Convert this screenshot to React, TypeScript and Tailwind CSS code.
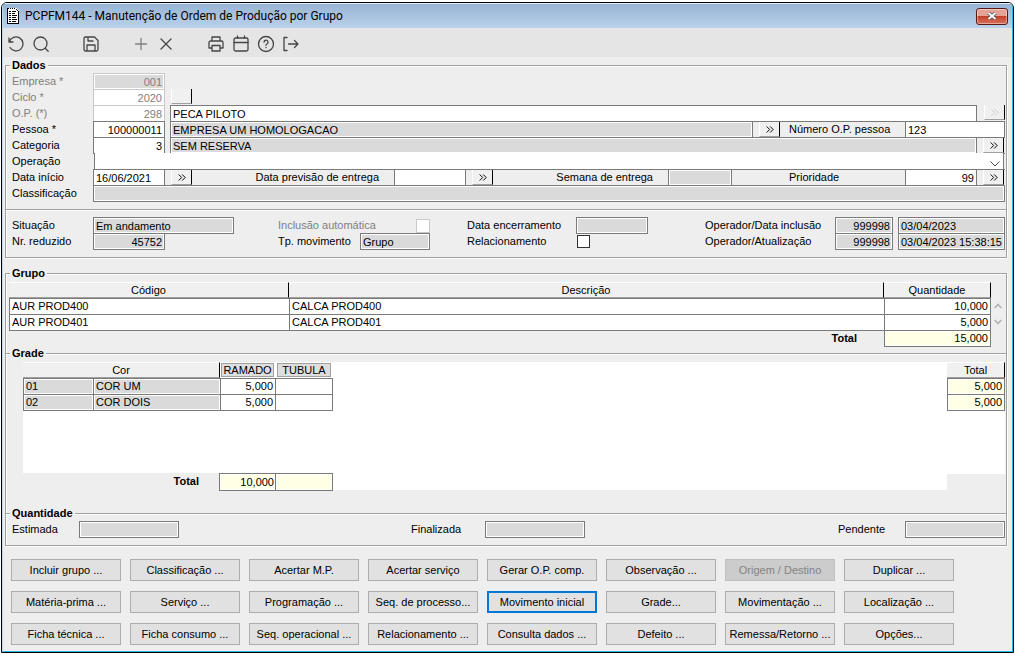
import type { ReactNode } from 'react'
import clsx from 'clsx'

const groupRows = [
  { code: 'AUR PROD400', description: 'CALCA PROD400', quantity: '10,000' },
  { code: 'AUR PROD401', description: 'CALCA PROD401', quantity: '5,000' },
]

const gradeRows = [
  { code: '01', color: 'COR UM', ramado: '5,000', total: '5,000' },
  { code: '02', color: 'COR DOIS', ramado: '5,000', total: '5,000' },
]

const actions = [
  'Incluir grupo ...', 'Classificação ...', 'Acertar M.P.', 'Acertar serviço',
  'Gerar O.P. comp.', 'Observação ...', 'Origem / Destino', 'Duplicar ...',
  'Matéria-prima ...', 'Serviço ...', 'Programação ...', 'Seq. de processo...',
  'Movimento inicial', 'Grade...', 'Movimentação ...', 'Localização ...',
  'Ficha técnica ...', 'Ficha consumo ...', 'Seq. operacional ...', 'Relacionamento ...',
  'Consulta dados ...', 'Defeito ...', 'Remessa/Retorno ...', 'Opções...',
]

function Icon({ children }: { children: ReactNode }) {
  return (
    <svg viewBox="0 0 18 18" className="size-[18px]" fill="none" stroke="currentColor" strokeWidth="1.3" strokeLinecap="round" strokeLinejoin="round">
      {children}
    </svg>
  )
}

function ToolButton({ name, className, children }: { name: string; className?: string; children: ReactNode }) {
  return (
    <button type="button" aria-label={name} className={clsx('flex h-6 w-[25px] items-center justify-center', className)}>
      <Icon>{children}</Icon>
    </button>
  )
}

function Group({ title, last, children }: { title: string; last?: boolean; children: ReactNode }) {
  return (
    <fieldset
      className={clsx(
        'min-w-0 border border-[#a0a0a0] shadow-[1px_1px_0_#fff,inset_1px_1px_0_#fff]',
        !last && 'border-b-0',
      )}
    >
      <legend className="ml-1 h-4 bg-[#eee] px-0.5 font-bold leading-4">{title}</legend>
      {children}
    </fieldset>
  )
}

type FieldProps = {
  id: string
  value?: string
  label?: string
  locked?: boolean
  faded?: boolean
  right?: boolean
  className?: string
}

function Field({ id, value = '', label, locked, faded, right, className }: FieldProps) {
  return (
    <input
      id={id}
      aria-label={label}
      type="text"
      defaultValue={value}
      readOnly={locked}
      className={clsx(
        'h-[17px] min-w-0 border px-0.5 outline-none',
        locked ? 'bg-[#dadada] shadow-[inset_0_0_0_1px_#fff]' : 'bg-white',
        faded ? 'border-[#c8c8c8] text-[#808080]' : 'border-[#7a7a7a]',
        right && 'text-right',
        className,
      )}
    />
  )
}

function Label({ id, faded, className, children }: { id: string; faded?: boolean; className?: string; children: ReactNode }) {
  return (
    <label htmlFor={id} className={clsx('h-4 whitespace-nowrap leading-4', faded && 'text-[#808080]', className)}>
      {children}
    </label>
  )
}

function Lookup({ name, disabled, blank }: { name: string; disabled?: boolean; blank?: boolean }) {
  return (
    <button
      type="button"
      aria-label={name}
      disabled={disabled}
      className="flex h-[15px] w-[21px] shrink-0 items-center justify-center border-b border-l border-r border-b-[#a0a0a0] border-l-white border-r-black bg-[#f0f0f0] text-black disabled:text-[#a8a8a8]"
    >
      {!blank && (
        <svg viewBox="0 0 8 7" className="h-[7px] w-2" fill="none" stroke="currentColor">
          <path d="M.7.5l3 3-3 3M4.200.5l3 3-3 3" strokeDasharray={disabled ? '1 1' : undefined} />
        </svg>
      )}
    </button>
  )
}

// Strip between two fields, framed above and below
function Strip({ className, children }: { className?: string; children?: ReactNode }) {
  return <div className={clsx('flex h-[17px] items-start border-y border-[#7a7a7a]', className)}>{children}</div>
}

function Row({ children }: { children: ReactNode }) {
  return <div className="flex h-4 items-start">{children}</div>
}

function TitleBar() {
  return (
    <header className="flex h-[25px] items-center border-t border-[#e6f0fa] bg-linear-to-b from-[#98b4d3] to-[#bad2eb] pl-[3px] pr-1">
      <svg viewBox="0 0 14 16" className="h-4 w-3.5" shapeRendering="crispEdges">
        <path d="M1 0h9l3 3v13H1z" fill="#fff" />
        <path d="M1 0h1v16H1zM12 3h1v13h-1zM1 15h12v1H1zM2 0h1v1H2zM4 0h1v1H4zM6 0h1v1H6zM8 0h1v1H8zM10 1h1v1h-1zM11 2h1v1h-1z" />
        <path d="M3 3h2v1H3zM6 3h4v1H6zM3 5h2v1H3zM6 5h3v1H6zM3 7h2v1H3zM6 7h5v1H6zM3 9h2v1H3zM6 9h4v1H6zM3 11h2v1H3zM6 11h5v1H6zM3 13h2v1H3zM6 13h4v1H6z" />
      </svg>
      <h1 className="ml-[5px] flex-1 font-['Roboto','Open_Sans',sans-serif] text-[12px] leading-4">
        PCPFM144 - Manutenção de Ordem de Produção por Grupo
      </h1>
      <button
        type="button"
        aria-label="Fechar"
        className="flex h-[17px] w-8 items-center justify-center rounded-[3px] border border-[#5a1a14] bg-linear-to-b from-[#e4a394] from-45% via-[#c3402a] via-50% to-[#d8715c] shadow-[inset_0_0_0_1px_rgba(255,255,255,0.4)]"
      >
        <svg viewBox="0 0 12 10" className="h-2.5 w-3">
          <path d="M2.500 2l7 6M9.500 2l-7 6" stroke="#4a4a5a" strokeWidth="3.6" />
          <path d="M2.500 2l7 6M9.500 2l-7 6" stroke="#fff" strokeWidth="2" />
        </svg>
      </button>
    </header>
  )
}

function Toolbar() {
  return (
    <div className="flex h-[29px] items-center bg-[#e5e5e5] pt-0.5 text-[#454545]">
      <ToolButton name="Desfazer">
        <path d="M2 3v4h4M2.300 7A7 7 0 1 1 3 12.500" />
      </ToolButton>
      <ToolButton name="Pesquisar">
        <circle cx="8.500" cy="8.500" r="6.500" />
        <path d="M13.200 13.200l3 3" />
      </ToolButton>
      <ToolButton name="Salvar" className="ml-[25px]">
        <path d="M2 3.500A1.500 1.500 0 0 1 3.500 2h9L16 5.500v9a1.500 1.500 0 0 1-1.500 1.500h-11A1.500 1.500 0 0 1 2 14.500zM5 16v-6h8v6M6 2v4h5" />
      </ToolButton>
      <ToolButton name="Incluir" className="ml-[25px] text-[#808080]">
        <path d="M9 3.500v11M3.500 9h11" />
      </ToolButton>
      <ToolButton name="Excluir">
        <path d="M4 4l10 10M14 4L4 14" />
      </ToolButton>
      <ToolButton name="Imprimir" className="ml-[25px]">
        <path d="M5 6V2h8v4M5 13H2V7.500A1.500 1.500 0 0 1 3.500 6h11A1.500 1.500 0 0 1 16 7.500V13h-3M5 10.500h8V16H5z" />
      </ToolButton>
      <ToolButton name="Calendário">
        <rect x="2" y="3" width="14" height="13" rx="1.500" />
        <path d="M2 7.500h14M5.500 1v2M12.500 1v2" />
      </ToolButton>
      <ToolButton name="Ajuda">
        <circle cx="9" cy="9" r="7.500" />
        <path d="M7 7.200a2 2 0 1 1 2.900 1.800c-.7.300-.9.700-.9 1.300M9 12.500v.2" />
      </ToolButton>
      <ToolButton name="Sair">
        <path d="M5 2.500H2v13h3M6.500 9H16M12.500 5.500L16 9l-3.500 3.500" />
      </ToolButton>
    </div>
  )
}

function OrderData() {
  return (
    <Group title="Dados" last>
      <div className="pl-1.5 pr-px">
        <Row>
          <Label id="empresa" faded className="w-[81px]">Empresa *</Label>
          <Field id="empresa" value="001" locked faded right className="w-[72px]" />
        </Row>
        <Row>
          <Label id="ciclo" faded className="w-[81px]">Ciclo *</Label>
          <Field id="ciclo" value="2020" faded right className="mr-1.5 w-[72px]" />
          <Lookup name="Ciclo" blank />
        </Row>
        <Row>
          <Label id="op" faded className="w-[81px]">O.P. (*)</Label>
          <Field id="op" value="298" faded right className="mr-[5px] w-[72px]" />
          <Field id="op-desc" label="Descrição da O.P." value="PECA PILOTO" className="mr-[7px] flex-1" />
          <Lookup name="Pesquisar O.P." disabled />
        </Row>
        <Row>
          <Label id="pessoa" className="w-[81px]">Pessoa *</Label>
          <Field id="pessoa" value="100000011" right className="mr-[5px] w-[72px]" />
          <Field id="pessoa-nome" label="Nome da pessoa" value="EMPRESA UM HOMOLOGACAO" locked className="flex-1" />
          <Strip className="w-[152px] pl-1.5">
            <Lookup name="Pesquisar pessoa" />
            <Label id="numero-op" className="-mt-px ml-[9px]">Número O.P. pessoa</Label>
          </Strip>
          <Field id="numero-op" value="123" className="w-[100px]" />
        </Row>
        <Row>
          <Label id="categoria" className="w-[81px]">Categoria</Label>
          <Field id="categoria" value="3" right className="mr-[5px] w-[72px]" />
          <Field id="categoria-desc" label="Descrição da categoria" value="SEM RESERVA" locked className="flex-1" />
          <Strip className="w-7 pl-1.5">
            <Lookup name="Pesquisar categoria" />
          </Strip>
        </Row>
        <Row>
          <Label id="operacao" className="w-[82px]">Operação</Label>
          <div className="relative mr-px h-4 flex-1">
            <select id="operacao" className="block h-4 w-full appearance-none border-x border-[#7a7a7a] bg-white outline-none" />
            <svg viewBox="0 0 10 6" className="pointer-events-none absolute right-1 top-2 h-1.5 w-2.5" fill="none" stroke="#555">
              <path d="M.5.5L5 5 9.500.5" />
            </svg>
          </div>
        </Row>
        <Row>
          <Label id="data-inicio" className="w-[81px]">Data início</Label>
          <Field id="data-inicio" value="16/06/2021" className="w-[72px]" />
          <Strip className="flex-1 pl-1.5">
            <Lookup name="Escolher data início" />
            <Label id="data-entrega" className="-mt-px flex-1 pr-[15px] text-right">Data previsão de entrega</Label>
          </Strip>
          <Field id="data-entrega" className="w-[72px]" />
          <Strip className="w-[202px] pl-1.5">
            <Lookup name="Escolher data de entrega" />
            <Label id="semana" className="-mt-px flex-1 pr-[15px] text-right">Semana de entrega</Label>
          </Strip>
          <Field id="semana" locked className="w-16" />
          <Strip className="w-[173px] pl-[57px]">
            <Label id="prioridade" className="-mt-px">Prioridade</Label>
          </Strip>
          <Field id="prioridade" value="99" right className="w-[72px]" />
          <Strip className="w-7 pl-1.5">
            <Lookup name="Pesquisar prioridade" />
          </Strip>
        </Row>
        <Row>
          <Label id="classificacao" className="w-[81px]">Classificação</Label>
          <Field id="classificacao" locked className="flex-1" />
        </Row>
      </div>
      <hr className="mt-2 border-[#a0a0a0] shadow-[0_1px_0_#fff]" />
      <div className="mt-[7px] grid grid-cols-[minmax(0,266fr)_minmax(0,189fr)_minmax(0,238fr)_minmax(0,300fr)] pb-2 pl-1.5 pr-px">
        <div>
          <Row>
            <Label id="situacao" className="w-[81px]">Situação</Label>
            <Field id="situacao" value="Em andamento" locked className="w-[141px]" />
          </Row>
          <Row>
            <Label id="reduzido" className="w-[81px]">Nr. reduzido</Label>
            <Field id="reduzido" value="45752" locked right className="w-[72px]" />
          </Row>
        </div>
        <div>
          <Row>
            <Label id="inclusao" faded className="w-[138px]">Inclusão automática</Label>
            <input id="inclusao" type="checkbox" disabled className="mt-0.5 size-3.5 appearance-none border border-[#c8c8c8] bg-white" />
          </Row>
          <Row>
            <Label id="movimento" className="w-[82px]">Tp. movimento</Label>
            <Field id="movimento" value="Grupo" locked className="w-[70px]" />
          </Row>
        </div>
        <div>
          <Row>
            <Label id="encerramento" className="w-[109px]">Data encerramento</Label>
            <Field id="encerramento" locked className="w-[72px]" />
          </Row>
          <Row>
            <Label id="relacionamento" className="w-[110px]">Relacionamento</Label>
            <input id="relacionamento" type="checkbox" className="mt-0.5 size-[13px] appearance-none border border-[#333] bg-white" />
          </Row>
        </div>
        <div>
          <Row>
            <Label id="operador-inclusao" className="w-[130px]">Operador/Data inclusão</Label>
            <Field id="operador-inclusao" value="999998" locked right className="mr-[5px] w-[58px]" />
            <Field id="data-inclusao" label="Data inclusão" value="03/04/2023" locked className="flex-1" />
          </Row>
          <Row>
            <Label id="operador-atualizacao" className="w-[130px]">Operador/Atualização</Label>
            <Field id="operador-atualizacao" value="999998" locked right className="mr-[5px] w-[58px]" />
            <Field id="data-atualizacao" label="Data atualização" value="03/04/2023 15:38:15" locked className="flex-1" />
          </Row>
        </div>
      </div>
    </Group>
  )
}

const headCell = 'border-b border-r border-t border-b-[#a0a0a0] border-r-black border-t-white bg-[#f0f0f0] p-0 text-center font-normal leading-[14px]'
const bodyCell = 'h-4 border-l border-t border-[#7a7a7a] px-0.5 py-0 leading-[15px]'
const totalCell = 'h-[17px] border border-[#7a7a7a] bg-[#ffffe6] px-0.5 py-0 text-right leading-[15px] shadow-[inset_0_0_0_1px_#fff]'

function GroupTable() {
  return (
    <Group title="Grupo">
      <div className="flex pb-1.5 pl-[3px] pt-px">
        <table className="flex-1 table-fixed border-separate border-spacing-0">
          <colgroup>
            <col className="w-[280px]" />
            <col />
            <col className="w-[107px]" />
          </colgroup>
          <thead>
            <tr className="h-4">
              <th className={headCell}>Código</th>
              <th className={headCell}>Descrição</th>
              <th className={headCell}>Quantidade</th>
            </tr>
          </thead>
          <tbody className="bg-white">
            {groupRows.map(row => (
              <tr key={row.code}>
                <td className={bodyCell}>{row.code}</td>
                <td className={bodyCell}>{row.description}</td>
                <td className={clsx(bodyCell, 'border-r text-right')}>{row.quantity}</td>
              </tr>
            ))}
          </tbody>
          <tfoot>
            <tr>
              <td colSpan={2} className="border-t border-[#7a7a7a] py-0 pl-0 pr-[27px] text-right align-top font-bold leading-[14px]">Total</td>
              <td className={totalCell}>15,000</td>
            </tr>
          </tfoot>
        </table>
        <div className="mt-4 flex h-8 w-[15px] flex-col pr-0.5 text-[#b4b4b4]">
          <button type="button" aria-label="Linha anterior" className="flex h-4 items-center justify-center">
            <svg viewBox="0 0 8 6" className="h-1.5 w-2" fill="none" stroke="currentColor" strokeWidth="1.8"><path d="M.7 5L4 1.500 7.300 5" /></svg>
          </button>
          <button type="button" aria-label="Próxima linha" className="flex h-4 items-center justify-center">
            <svg viewBox="0 0 8 6" className="h-1.5 w-2" fill="none" stroke="currentColor" strokeWidth="1.8"><path d="M.7 1L4 4.500 7.300 1" /></svg>
          </button>
        </div>
      </div>
    </Group>
  )
}

const chip = 'border border-[#a0a0a0] bg-[#dedede] leading-3'

function GradeTable() {
  return (
    <Group title="Grade">
      <div className="flex pb-[22px] pl-[17px] pr-px pt-px">
        <div className="w-[310px]">
          <div className="h-[111px] bg-white">
            <table className="w-full table-fixed border-separate border-spacing-0">
              <colgroup>
                <col className="w-[70px]" />
                <col className="w-[127px]" />
                <col className="w-[55px]" />
                <col />
              </colgroup>
              <thead>
                <tr className="h-[15px]">
                  <th colSpan={2} className={headCell}>Cor</th>
                  <th className="p-0 px-px font-normal"><div className={chip}>RAMADO</div></th>
                  <th className="p-0 pl-0.5 pr-0.5 font-normal"><div className={chip}>TUBULA</div></th>
                </tr>
              </thead>
              <tbody>
                {gradeRows.map((row, i) => {
                  const cell = clsx(bodyCell, i === gradeRows.length - 1 && 'border-b')
                  return (
                    <tr key={row.code}>
                      <td className={clsx(cell, 'bg-[#dadada] shadow-[inset_0_0_0_1px_#fff]')}>{row.code}</td>
                      <td className={clsx(cell, 'bg-[#dadada] shadow-[inset_0_0_0_1px_#fff]')}>{row.color}</td>
                      <td className={clsx(cell, 'text-right')}>{row.ramado}</td>
                      <td className={clsx(cell, 'border-r')} />
                    </tr>
                  )
                })}
              </tbody>
            </table>
          </div>
          <div className="flex justify-end">
            <Label id="total-ramado" className="mr-5 font-bold">Total</Label>
            <input id="total-ramado" readOnly defaultValue="10,000" className="h-[18px] w-[57px] border border-[#7a7a7a] bg-[#ffffe6] px-px text-right shadow-[inset_0_0_0_1px_#fff]" />
            <input readOnly aria-label="Total tubular" className="h-[18px] w-[57px] border border-l-0 border-[#7a7a7a] bg-[#ffffe6] shadow-[inset_0_0_0_1px_#fff]" />
          </div>
        </div>
        <div className="mb-px flex-1 bg-white" />
        <div className="h-[112px] w-[58px] bg-white">
          <table className="w-full table-fixed border-separate border-spacing-0">
            <thead>
              <tr className="h-[15px]">
                <th className={headCell}>Total</th>
              </tr>
            </thead>
            <tbody>
              {gradeRows.map((row, i) => (
                <tr key={row.code}>
                  <td className={clsx(bodyCell, 'border-r bg-[#ffffe6] text-right shadow-[inset_0_0_0_1px_#fff]', i === gradeRows.length - 1 && 'border-b')}>{row.total}</td>
                </tr>
              ))}
            </tbody>
          </table>
        </div>
      </div>
    </Group>
  )
}

function Quantities() {
  return (
    <Group title="Quantidade" last>
      <div className="grid grid-cols-[399fr_427fr_167fr] pb-[7px] pl-1.5 pr-px">
        <div className="flex">
          <Label id="estimada" className="w-[67px]">Estimada</Label>
          <Field id="estimada" locked className="w-[100px]" />
        </div>
        <div className="flex">
          <Label id="finalizada" className="w-[74px]">Finalizada</Label>
          <Field id="finalizada" locked className="w-[100px]" />
        </div>
        <div className="flex">
          <Label id="pendente" className="w-[67px]">Pendente</Label>
          <Field id="pendente" locked className="w-[100px]" />
        </div>
      </div>
    </Group>
  )
}

function Actions() {
  return (
    <div className="mt-[13px] grid grid-cols-8 gap-x-[9px] gap-y-2.5 pb-1.5 pl-1.5 pr-[53px]">
      {actions.map(label => (
        <button
          key={label}
          type="button"
          disabled={label === 'Origem / Destino'}
          className={clsx(
            'h-[22px] whitespace-nowrap bg-[#e1e1e1] leading-4 disabled:border-[#bfbfbf] disabled:bg-[#ccc] disabled:text-[#838383]',
            label === 'Movimento inicial' ? 'border-2 border-[#0078d7]' : 'border border-[#adadad]',
          )}
        >
          {label}
        </button>
      ))}
    </div>
  )
}

export default function App() {
  return (
    <div className="bg-white px-px pt-0.5 font-['Liberation_Sans',Arial,sans-serif] text-[11px] text-black">
      <div className="overflow-hidden rounded-t-md border border-black bg-[#eee]">
        <div className="border border-t-0 border-b-[#29b6e8] border-l-[#b9d9f5] border-r-[#29b6e8]">
          <TitleBar />
          <Toolbar />
          <main className="pl-0.5 pr-[5px]">
            <OrderData />
            <div className="h-[7px]" />
            <GroupTable />
            <div className="-mt-2">
              <GradeTable />
            </div>
            <div className="-mt-2">
              <Quantities />
            </div>
            <Actions />
          </main>
        </div>
      </div>
    </div>
  )
}
